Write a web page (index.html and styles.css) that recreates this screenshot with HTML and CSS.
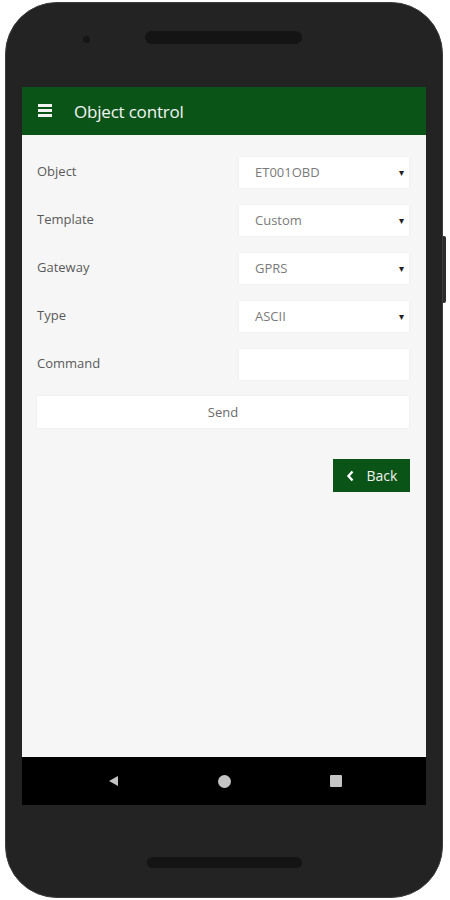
FILE: index.html
```html
<!DOCTYPE html>
<html lang="en">

<head>
    <meta charset="UTF-8">
    <meta name="viewport" content="width=device-width, initial-scale=1.0">
    <title>Object control</title>
    <link rel="stylesheet" href="styles.css">
</head>

<body>
    <div class="phone">
        <div class="side-button"></div>

        <div class="bezel-top">
            <span class="camera"></span>
            <span class="speaker"></span>
        </div>

        <div class="screen">
            <header class="appbar">
                <span class="burger"><i></i><i></i><i></i></span>
                <span class="title">Object control</span>
            </header>

            <main class="content">
                <div class="row">
                    <label>Object</label>
                    <div class="field"><span>ET001OBD</span><span class="caret">&#9662;</span></div>
                </div>
                <div class="row">
                    <label>Template</label>
                    <div class="field"><span>Custom</span><span class="caret">&#9662;</span></div>
                </div>
                <div class="row">
                    <label>Gateway</label>
                    <div class="field"><span>GPRS</span><span class="caret">&#9662;</span></div>
                </div>
                <div class="row">
                    <label>Type</label>
                    <div class="field"><span>ASCII</span><span class="caret">&#9662;</span></div>
                </div>
                <div class="row">
                    <label>Command</label>
                    <div class="field"></div>
                </div>

                <div class="send">Send</div>

                <div class="actions">
                    <div class="back">
                        <svg width="9" height="12" viewBox="0 0 9 12">
                            <path d="M6.5 1.5 L2.5 6 L6.5 10.5" fill="none" stroke="#fff" stroke-width="2.4" />
                        </svg>
                        <span>Back</span>
                    </div>
                </div>
            </main>

            <nav class="navbar">
                <svg width="12" height="14" viewBox="0 0 12 14">
                    <path d="M11 2 L11 12 L2 7 Z" fill="#c4c4c4" />
                </svg>
                <svg width="13" height="13" viewBox="0 0 13 13">
                    <circle cx="6.5" cy="6.5" r="6.5" fill="#c4c4c4" />
                </svg>
                <svg width="12" height="12" viewBox="0 0 12 12">
                    <rect x="0" y="0" width="12" height="12" rx="1" fill="#c4c4c4" />
                </svg>
            </nav>
        </div>

        <div class="bezel-bottom">
            <span class="speaker"></span>
        </div>
    </div>
</body>

</html>
```

FILE: styles.css
```css
* {
    padding: 0;
    margin: 0;
    box-sizing: border-box;
}

body {
    background-color: #ffffff;
    font-family: "Open Sans", "Noto Sans", sans-serif;
}

.phone {
    position: relative;
    width: 438px;
    height: 896px;
    margin: 2px 0 0 5px;
    background-color: #232323;
    border: 1px solid #3c3c3c;
    border-radius: 52px;
    display: flex;
    flex-direction: column;
}

.side-button {
    position: absolute;
    right: -4px;
    top: 233px;
    width: 3px;
    height: 67px;
    background-color: #2c2c2c;
    border-radius: 0 2px 2px 0;
}

.bezel-top {
    height: 84px;
    display: flex;
    align-items: flex-start;
    padding-top: 28px;
}

.camera {
    width: 7px;
    height: 7px;
    margin: 5px 0 0 77px;
    border-radius: 50%;
    background-color: #161616;
}

.speaker {
    width: 157px;
    height: 13px;
    border-radius: 7px;
    background-color: #141414;
}

.bezel-top .speaker {
    margin-left: 55px;
}

.screen {
    margin: 0 16px;
    height: 718px;
    background-color: #f6f6f6;
    display: flex;
    flex-direction: column;
}

.appbar {
    height: 48px;
    background-color: #0b5418;
    display: flex;
    align-items: center;
    padding-left: 16px;
}

.burger {
    width: 14px;
    display: flex;
    flex-direction: column;
    gap: 2.5px;
    margin-top: -1px;
}

.burger i {
    display: block;
    height: 2.6px;
    background-color: #f2f2f2;
}

.title {
    margin-left: 22px;
    color: #f4f4f4;
    font-size: 17px;
    letter-spacing: -0.2px;
}

.content {
    flex: 1;
    padding: 22px 17px 0 15px;
    display: flex;
    flex-direction: column;
    gap: 18px;
}

.row {
    display: flex;
    align-items: center;
    justify-content: space-between;
    height: 30px;
}

.row label {
    color: #5a5a5a;
    font-size: 13px;
    margin-top: -2px;
}

.field {
    width: 170px;
    height: 31px;
    background-color: #ffffff;
    box-shadow: 0 0 1px rgba(0, 0, 0, 0.12);
    display: flex;
    align-items: center;
    justify-content: space-between;
    padding: 0 5px 0 16px;
    font-size: 13px;
    color: #7a7a7a;
}

.caret {
    color: #222;
    font-size: 10px;
}

.send {
    height: 32px;
    margin-top: -1px;
    background-color: #ffffff;
    box-shadow: 0 0 1px rgba(0, 0, 0, 0.15);
    display: flex;
    align-items: center;
    justify-content: center;
    color: #6a6a6a;
    font-size: 13px;
}

.actions {
    display: flex;
    justify-content: flex-end;
    margin-top: 13px;
}

.back {
    width: 77px;
    height: 33px;
    margin-right: -1px;
    background-color: #0b5418;
    display: flex;
    align-items: center;
    justify-content: center;
    gap: 12px;
    color: #f2f2f2;
    font-size: 14px;
}

.navbar {
    height: 48px;
    background-color: #000000;
    display: flex;
    align-items: center;
    justify-content: center;
    gap: 99px;
}

.bezel-bottom {
    flex: 1;
    display: flex;
    justify-content: center;
    padding-top: 52px;
}

.bezel-bottom .speaker {
    width: 155px;
    height: 11px;
}
```
